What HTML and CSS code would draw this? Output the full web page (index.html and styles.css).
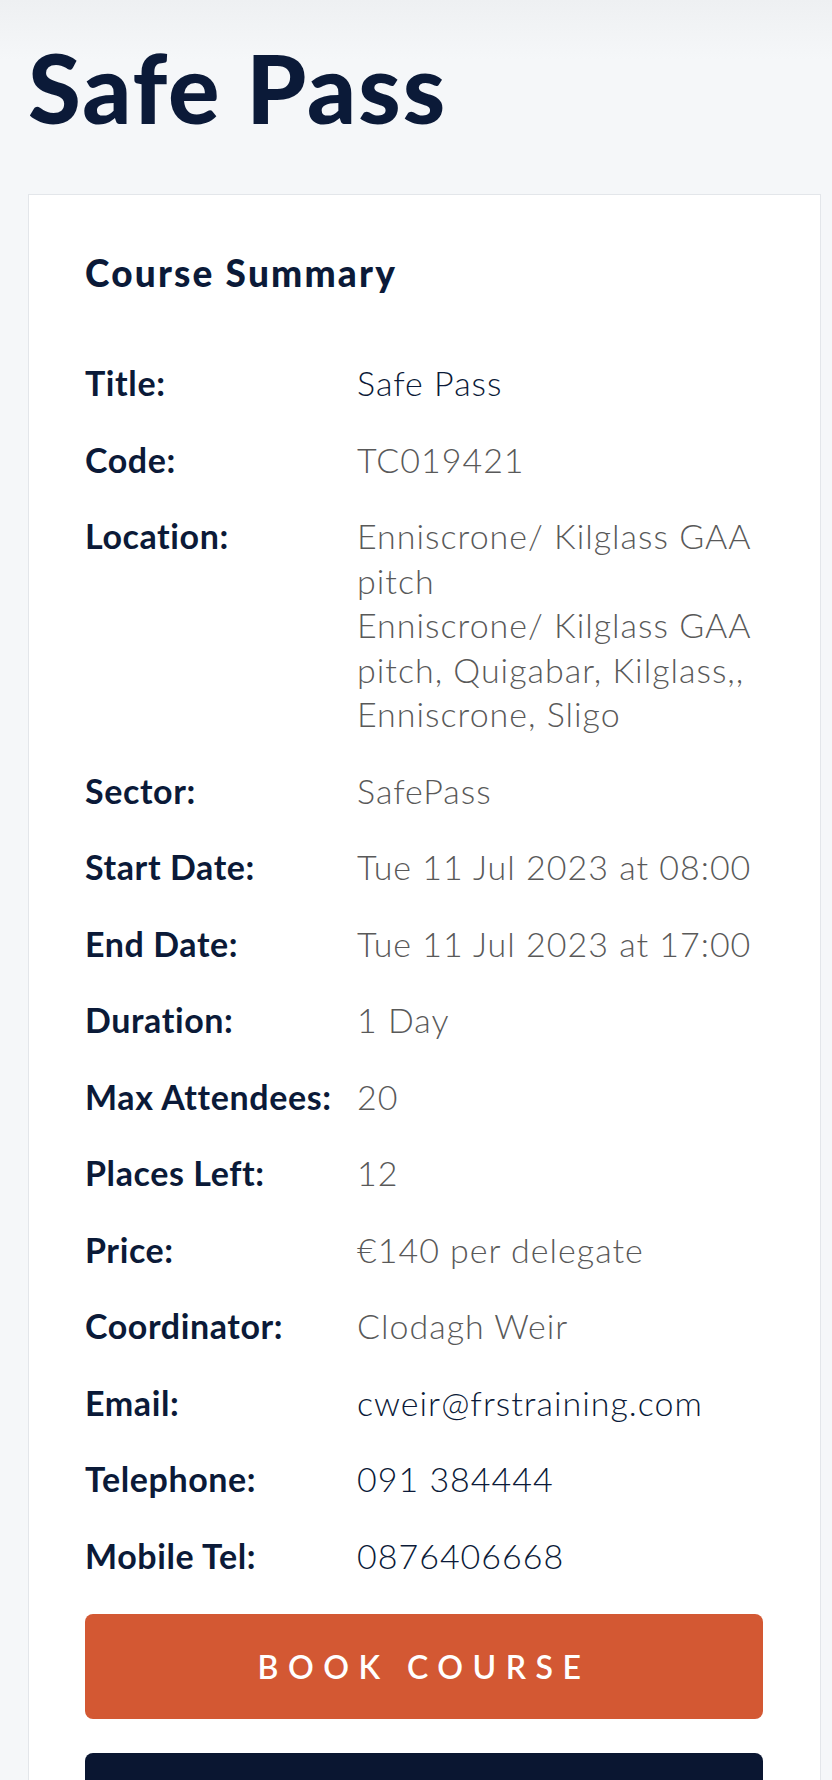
FILE: index.html
```html
<!DOCTYPE html>
<html lang="en">
<head>
    <meta charset="UTF-8">
    <meta name="viewport" content="width=device-width, initial-scale=1.0">
    <title>Safe Pass</title>
    <link rel="stylesheet" href="styles.css">
</head>
<body>
    <h1 class="page-title">Safe Pass</h1>
    <div class="summary-card">
        <h2 class="summary-heading">Course Summary</h2>
        <dl class="summary-list">
            <dt>Title:</dt>
            <dd class="dark">Safe Pass</dd>
            <dt>Code:</dt>
            <dd>TC019421</dd>
            <dt>Location:</dt>
            <dd>Enniscrone/ Kilglass GAA pitch<br>Enniscrone/ Kilglass GAA pitch, Quigabar, Kilglass,, Enniscrone, Sligo</dd>
            <dt>Sector:</dt>
            <dd>SafePass</dd>
            <dt>Start Date:</dt>
            <dd>Tue 11 Jul 2023 at 08:00</dd>
            <dt>End Date:</dt>
            <dd>Tue 11 Jul 2023 at 17:00</dd>
            <dt>Duration:</dt>
            <dd>1 Day</dd>
            <dt>Max Attendees:</dt>
            <dd>20</dd>
            <dt>Places Left:</dt>
            <dd>12</dd>
            <dt>Price:</dt>
            <dd>€140 per delegate</dd>
            <dt>Coordinator:</dt>
            <dd>Clodagh Weir</dd>
            <dt>Email:</dt>
            <dd class="dark">cweir@frstraining.com</dd>
            <dt>Telephone:</dt>
            <dd class="dark">091 384444</dd>
            <dt>Mobile Tel:</dt>
            <dd class="dark">0876406668</dd>
        </dl>
        <a class="btn btn-book" href="#">Book Course</a>
        <a class="btn btn-dark" href="#" aria-label="Enquire"></a>
    </div>
</body>
</html>
```
FILE: styles.css
```css
* {
    box-sizing: border-box;
    margin: 0;
    padding: 0;
}

body {
    font-family: 'Lato', sans-serif;
    color: #0b1a38;
    background: linear-gradient(#eef0f2 0, #f5f7f9 60px, #f5f7f9 100%);
    min-height: 100vh;
    padding: 0 11px 0 28px;
    overflow: hidden;
}

.page-title {
    font-size: 96px;
    font-weight: 900;
    line-height: 1;
    padding-top: 39px;
    height: 194px;
    letter-spacing: 2px;
}

.summary-card {
    background: #fff;
    border: 1px solid #e3e6ea;
    border-bottom: none;
    padding: 56px 57px 0 56px;
}

.summary-heading {
    font-size: 37px;
    font-weight: 900;
    line-height: 1.2;
    letter-spacing: 2.2px;
    margin-bottom: 66px;
}

.summary-list {
    display: grid;
    grid-template-columns: 272px 1fr;
    row-gap: 32px;
    font-size: 34px;
    line-height: 44.5px;
}

.summary-list dt {
    font-weight: 700;
    letter-spacing: 0.6px;
}

.summary-list dd {
    font-weight: 300;
    letter-spacing: 1px;
    color: #595959;
}

.summary-list dd.dark {
    color: #0b1a38;
}

.btn {
    display: flex;
    align-items: center;
    justify-content: center;
    height: 105px;
    border-radius: 8px;
    color: #fff;
    text-decoration: none;
    text-transform: uppercase;
    font-size: 32px;
    font-weight: 600;
    letter-spacing: 9.5px;
}

.btn-book {
    margin-top: 36px;
    background: #d35833;
}

.btn-dark {
    margin-top: 34px;
    background: #0a1631;
}
```
